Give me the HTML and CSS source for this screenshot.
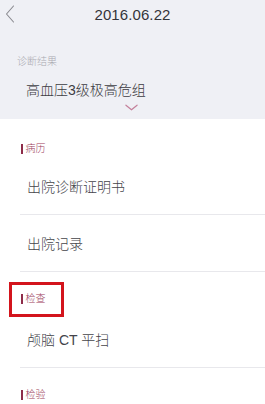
FILE: index.html
```html
<!DOCTYPE html>
<html lang="zh-CN">
<head>
    <meta charset="UTF-8">
    <meta name="viewport" content="width=device-width, initial-scale=1.0">
    <title>2016.06.22</title>
    <link rel="stylesheet" href="styles.css">
</head>
<body>
    <div class="record-header">
        <div class="top-bar">
            <button class="back-btn">
                <svg viewBox="0 0 10 18" fill="none" stroke="#8a8a90" stroke-width="1.1" stroke-linecap="round" stroke-linejoin="round">
                    <polyline points="8.5,1 1.5,9 8.5,17"></polyline>
                </svg>
            </button>
            <div class="top-title">2016.06.22</div>
        </div>

        <div class="diagnosis-label">诊断结果</div>
        <div class="diagnosis-value">高血压3级极高危组</div>
        <div class="expand-icon">
            <svg viewBox="0 0 14 7" fill="none" stroke="#c4809b" stroke-width="1.3" stroke-linecap="round" stroke-linejoin="round">
                <polyline points="1,1 7,6 13,1"></polyline>
            </svg>
        </div>
    </div>

    <div class="section first">
        <div class="section-title"><span class="section-bar"></span>病历</div>
        <div class="section-item">出院诊断证明书</div>
        <div class="section-item">出院记录</div>
    </div>

    <div class="section">
        <div class="section-title">
            <span class="section-bar"></span>检查
            <!-- annotation box drawn over the title -->
            <span class="mark-box"></span>
        </div>
        <div class="section-item">颅脑 CT 平扫</div>
    </div>

    <div class="section">
        <div class="section-title"><span class="section-bar"></span>检验</div>
    </div>
</body>
</html>
```

FILE: styles.css
```css
* {
    margin: 0;
    padding: 0;
    box-sizing: border-box;
}

body {
    font-family: "Liberation Sans", "Noto Sans CJK SC", sans-serif;
    background: #ffffff;
    color: #3a3a3e;
    width: 265px;
    overflow: hidden;
}

/* Header with diagnosis */
.record-header {
    background: #eff0f5;
    height: 119px;
    display: flex;
    flex-direction: column;
}

.top-bar {
    height: 28px;
    position: relative;
    display: flex;
    justify-content: center;
    align-items: center;
}

.back-btn {
    position: absolute;
    left: 5px;
    top: 5px;
    width: 10px;
    height: 18px;
    background: transparent;
    border: none;
}

.back-btn svg {
    width: 100%;
    height: 100%;
    display: block;
}

.top-title {
    font-size: 15px;
    color: #34343a;
    letter-spacing: 0.1px;
}

.diagnosis-label {
    margin-top: 27px;
    padding-left: 17px;
    font-size: 10px;
    line-height: 14px;
    font-weight: 300;
    color: #a9a9b0;
}

.diagnosis-value {
    margin-top: 11px;
    padding-left: 26px;
    font-size: 14px;
    line-height: 20px;
    font-weight: 300;
    color: #3c3c42;
}

.expand-icon {
    width: 13px;
    height: 7px;
    margin: 4px 0 0 125px;
}

.expand-icon svg {
    width: 100%;
    height: 100%;
    display: block;
}

/* Sections */
.section-title {
    position: relative;
    display: flex;
    align-items: center;
    padding: 20px 0 5px 21px;
    font-size: 10px;
    line-height: 14px;
    font-weight: 300;
    color: #9c3d5a;
}

.section.first .section-title {
    padding-top: 23px;
    padding-bottom: 2px;
}

.section-bar {
    width: 1.5px;
    height: 10px;
    background: #8e2c49;
    margin-right: 3px;
}

.section-item {
    height: 57px;
    margin-left: 20px;
    padding-left: 7px;
    border-bottom: 1px solid #e8e8ec;
    display: flex;
    align-items: center;
    font-size: 14px;
    font-weight: 300;
    color: #44444a;
}

.mark-box {
    position: absolute;
    left: 9px;
    top: 10px;
    width: 55px;
    height: 35px;
    border: 3px solid #d3141c;
}
```
